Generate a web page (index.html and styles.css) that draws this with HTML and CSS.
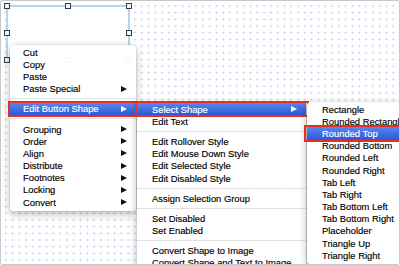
FILE: index.html
```html
<!DOCTYPE html>
<html lang="en">
<head>
<meta charset="UTF-8">
<title>Edit Button Shape</title>
<link rel="stylesheet" href="styles.css">
</head>
<body>
<div class="canvas">

  <div class="selection">
    <span class="handle tl"></span>
    <span class="handle tm"></span>
    <span class="handle tr"></span>
    <span class="handle ml"></span>
    <span class="handle mr"></span>
    <span class="handle bl"></span>
    <span class="handle bm"></span>
    <span class="handle br"></span>
  </div>

  <div class="menu menu-main">
    <div class="item">Cut</div>
    <div class="item">Copy</div>
    <div class="item">Paste</div>
    <div class="item sub">Paste Special<i class="arrow"></i></div>
    <div class="sep"></div>
    <div class="item sub hl">Edit Button Shape<i class="arrow"></i></div>
    <div class="sep"></div>
    <div class="item sub">Grouping<i class="arrow"></i></div>
    <div class="item sub">Order<i class="arrow"></i></div>
    <div class="item sub">Align<i class="arrow"></i></div>
    <div class="item sub">Distribute<i class="arrow"></i></div>
    <div class="item sub">Footnotes<i class="arrow"></i></div>
    <div class="item sub">Locking<i class="arrow"></i></div>
    <div class="item sub">Convert<i class="arrow"></i></div>
  </div>

  <div class="menu menu-edit">
    <div class="item sub hl">Select Shape<i class="arrow"></i></div>
    <div class="item">Edit Text</div>
    <div class="sep"></div>
    <div class="item">Edit Rollover Style</div>
    <div class="item">Edit Mouse Down Style</div>
    <div class="item">Edit Selected Style</div>
    <div class="item">Edit Disabled Style</div>
    <div class="sep"></div>
    <div class="item">Assign Selection Group</div>
    <div class="sep"></div>
    <div class="item">Set Disabled</div>
    <div class="item">Set Enabled</div>
    <div class="sep"></div>
    <div class="item">Convert Shape to Image</div>
    <div class="item">Convert Shape and Text to Image</div>
  </div>

  <div class="menu menu-shape">
    <div class="item">Rectangle</div>
    <div class="item">Rounded Rectangle</div>
    <div class="item hl">Rounded Top</div>
    <div class="item">Rounded Bottom</div>
    <div class="item">Rounded Left</div>
    <div class="item">Rounded Right</div>
    <div class="item">Tab Left</div>
    <div class="item">Tab Right</div>
    <div class="item">Tab Bottom Left</div>
    <div class="item">Tab Bottom Right</div>
    <div class="item">Placeholder</div>
    <div class="item">Triangle Up</div>
    <div class="item">Triangle Right</div>
  </div>

</div>
</body>
</html>
```

FILE: styles.css
```css
body {
margin: 0;
background: #fff;
font-family: "Liberation Sans", Arial, sans-serif;
}

.canvas {
position: relative;
width: 398px;
height: 263px;
border: 1px solid #c9c9c9;
border-radius: 2px;
overflow: hidden;
background-color: #fff;
background-image: radial-gradient(circle, #c3c3f3 0, #c3c3f3 0.7px, transparent 1.2px);
background-size: 6.8px 6.7px;
background-position: 1.4px 1.6px;
}

/* selected button on the canvas */
.selection {
position: absolute;
left: 5px;
top: 4px;
width: 120px;
height: 52px;
border: 2px solid #b6d4f0;
background: #fff;
}

.handle {
position: absolute;
width: 4px;
height: 4px;
border: 1px solid #3a3a3a;
background: #f4f4f4;
}
.handle.tl { left: -4px; top: -4px; }
.handle.tm { left: 57px; top: -4px; }
.handle.tr { right: -4px; top: -4px; }
.handle.ml { left: -4px; top: 23px; }
.handle.mr { right: -4px; top: 23px; }
.handle.bl { left: -4px; bottom: -4px; }
.handle.bm { left: 57px; bottom: -4px; }
.handle.br { right: -4px; bottom: -4px; }

/* context menus */
.menu {
position: absolute;
display: flex;
flex-direction: column;
padding: 1px 0 3px;
background: rgba(255,255,255,0.96);
border-radius: 4px;
box-shadow: 0 3px 9px rgba(0,0,0,0.28), 0 0 0 1px rgba(0,0,0,0.05);
font-size: 9.4px;
color: #000;
-webkit-text-stroke: 0.15px #000;
}

.menu-main {
left: 9px;
top: 44px;
width: 126px;
}

.menu-edit {
left: 136px;
top: 101px;
width: 169px;
}

.menu-shape {
left: 306px;
top: 101px;
width: 110px;
}

.item {
position: relative;
display: flex;
align-items: center;
justify-content: space-between;
height: 12.2px;
padding: 0 9px 0 14px;
white-space: nowrap;
}

.menu-main .item { padding-left: 13px; }
.menu-edit .item { padding-left: 15px; }
.menu-shape .item { padding-left: 15px; }

.arrow {
width: 0;
height: 0;
border-left: 6px solid #111;
border-top: 3.5px solid transparent;
border-bottom: 3.5px solid transparent;
}

.sep {
height: 8px;
display: flex;
align-items: center;
}
.sep::before {
content: '';
flex: 1;
height: 1px;
background: #e2e2e2;
}

/* highlighted item with the red callout box */
.item.hl {
color: #fff;
-webkit-text-stroke: 0.15px #fff;
background: linear-gradient(#5b86ee, #2c58d6);
}
.item.hl .arrow { border-left-color: #fff; }
.item.hl::after {
content: '';
position: absolute;
left: -2px;
right: -2px;
top: -2px;
bottom: -2px;
border: 2px solid #e2321f;
}
.menu-edit .item.hl::after { right: -3px; }
.menu-shape .item.hl::after { left: -3px; }
```
